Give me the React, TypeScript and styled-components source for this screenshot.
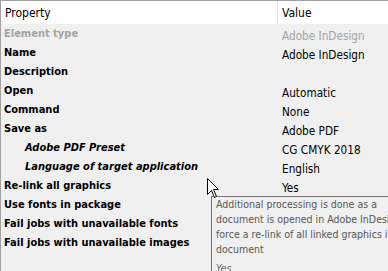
import React from 'react';
import styled, {createGlobalStyle} from 'styled-components';

const GlobalStyle = createGlobalStyle`
  html, body {
    margin: 0;
    padding: 0;
    background: #f0f0f0;
    overflow: hidden;
  }
`

const Panel = styled.div`
  position: relative;
  width: 388px;
  height: 271px;
  box-sizing: border-box;
  border-top: 1px solid #a0a0a0;
  border-left: 1px solid #a0a0a0;
  background: #f0f0f0;
  font-family: "DejaVu Sans Condensed", "DejaVu Sans", sans-serif;
  font-size: 11px;
  color: #000;
  overflow: hidden;
`

const Header = styled.div`
  display: grid;
  grid-template-columns: 276px 1fr;
  height: 23px;
  background: #fff;
`

const HeaderCell = styled.div<{ $divider?: boolean }>`
  display: flex;
  align-items: center;
  padding-left: 4px;
  border-left: ${p => p.$divider ? '1px solid #e5e5e5' : 'none'};
  font-size: 12px;
`

const Row = styled.div`
  display: grid;
  grid-template-columns: 277px 1fr;
  height: 19px;
`

const Name = styled.div<{ $indent?: boolean; $muted?: boolean }>`
  display: flex;
  align-items: center;
  padding-left: ${p => p.$indent ? '24px' : '3px'};
  font-weight: bold;
  font-style: ${p => p.$indent ? 'italic' : 'normal'};
  color: ${p => p.$muted ? '#a3a3a3' : '#000'};
  white-space: nowrap;
`

const Value = styled.div<{ $muted?: boolean }>`
  display: flex;
  align-items: center;
  padding: 4px 0 0 4px;
  font-size: 11.7px;
  color: ${p => p.$muted ? '#a3a3a3' : '#000'};
  white-space: nowrap;
`

const Tooltip = styled.div`
  position: absolute;
  left: 210px;
  top: 195px;
  width: 200px;
  height: 100px;
  box-sizing: border-box;
  border: 1px solid #767676;
  background: #f0f0f0;
  padding: 0 0 0 4px;
  color: #575757;
  font-size: 10.5px;
  line-height: 15px;
  white-space: nowrap;
`

const TipYes = styled.div`
  margin-top: 4px;
  font-style: italic;
  color: #6d6d6d;
`

const Cursor = styled.svg`
  position: absolute;
  left: 206px;
  top: 177px;
`

const rows: { name: string; value?: string; indent?: boolean; muted?: boolean }[] = [
    {name: 'Element type', value: 'Adobe InDesign', muted: true},
    {name: 'Name', value: 'Adobe InDesign'},
    {name: 'Description'},
    {name: 'Open', value: 'Automatic'},
    {name: 'Command', value: 'None'},
    {name: 'Save as', value: 'Adobe PDF'},
    {name: 'Adobe PDF Preset', value: 'CG CMYK 2018', indent: true},
    {name: 'Language of target application', value: 'English', indent: true},
    {name: 'Re-link all graphics', value: 'Yes'},
    {name: 'Use fonts in package'},
    {name: 'Fail jobs with unavailable fonts'},
    {name: 'Fail jobs with unavailable images'},
]

const App = () => (
    <>
        <GlobalStyle/>
        <Panel>
            <Header>
                <HeaderCell>Property</HeaderCell>
                <HeaderCell $divider>Value</HeaderCell>
            </Header>
            {rows.map(r => (
                <Row key={r.name}>
                    <Name $indent={r.indent} $muted={r.muted}>{r.name}</Name>
                    <Value $muted={r.muted}>{r.value}</Value>
                </Row>
            ))}
            <Tooltip>
                <div>Additional processing is done as a</div>
                <div>document is opened in Adobe InDesign to</div>
                <div>force a re-link of all linked graphics in the</div>
                <div>document</div>
                <TipYes>Yes</TipYes>
            </Tooltip>
            <Cursor width="13" height="21" viewBox="0 0 13 21">
                <path d="M0.5 0.5 L0.5 16.5 L4.5 12.5 L7.5 19.5 L9.5 18.5 L6.5 11.5 L11.5 11.5 Z"
                      fill="#fff" stroke="#000" strokeWidth="1"/>
            </Cursor>
        </Panel>
    </>
);

export default App;
